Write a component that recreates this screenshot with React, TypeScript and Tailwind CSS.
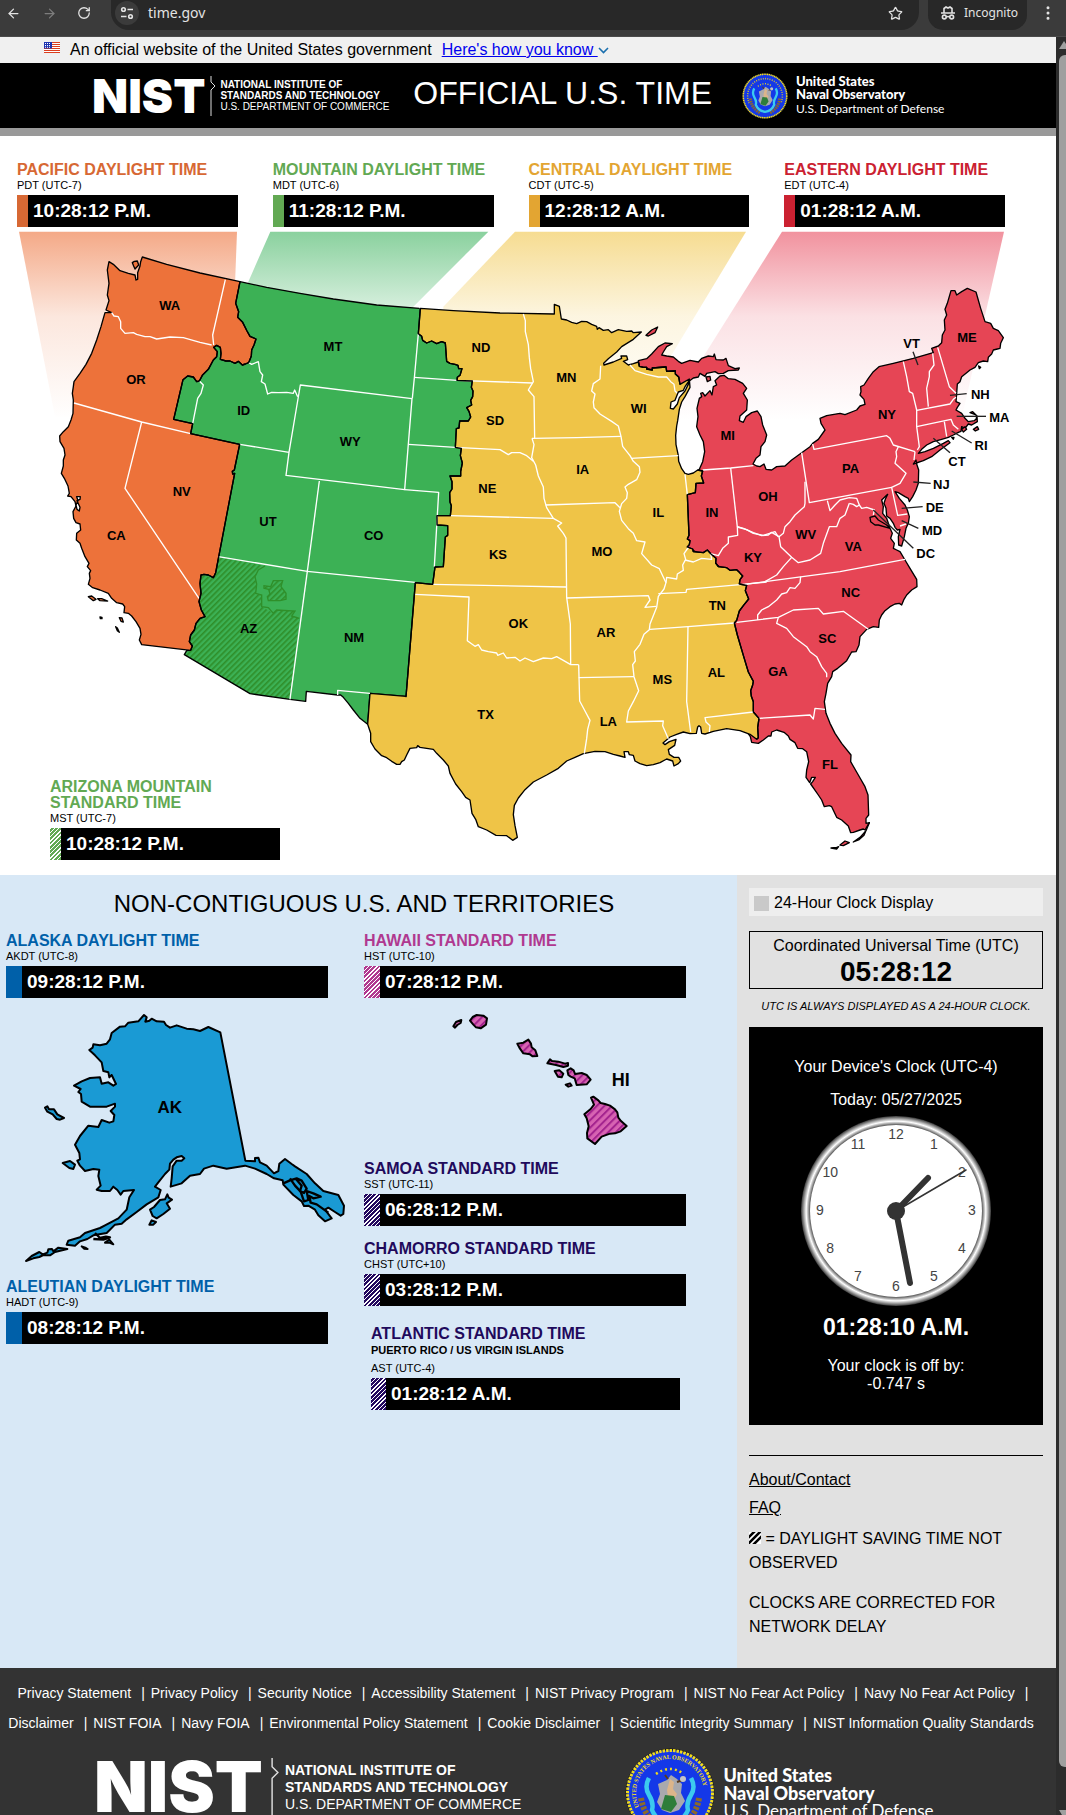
import { ArrowLeft, ArrowRight, ChevronDown, EllipsisVertical, RotateCw, Star } from "lucide-react";

type Place = (points: string) => string;

/* Moves a list of points from its own survey sheet onto the shared drawing. */
function sheet(dx: number, dy: number, ky = 1): Place {
  return (points) =>
    points
      .trim()
      .split(/\s+/)
      .map((pair) => {
        const [x, y] = pair.split(",").map(Number);
        return `${x + dx},${Math.round(y * ky + dy)}`;
      })
      .join(" ");
}

const west = sheet(0, 0);
const mid = sheet(1200, 150, 1.1098);
const texas = sheet(960, 1350);
const northEast = sheet(1980, 120);
const southEast = sheet(1980, 930);
const alaska = sheet(0, -924, 1.2627);
const hawaii = sheet(-42, -354, 1.0331);

const northBorderWest = "720,155 800,172 900,190 1000,207 1130,225 1258,235";

const pacificEast =
  "720,155 707,220 716,245 713,262 728,277 741,303 750,319 768,327 762,345 755,360 754,378 746,398 736,402 727,405 715,394 705,400 690,393 678,393 661,388 663,370 661,352 650,346 641,352 652,365 650,380 640,390 625,418 607,436 598,453 590,455 580,441 563,438 549,449 521,568 578,581 572,611 719,643 703,720 697,724 698,732 704,730 647,1028 640,1043 625,1035 612,1033 603,1035 600,1060 603,1090 597,1115 604,1140 615,1160 600,1165 588,1180 583,1200 572,1215 568,1235 577,1248 572,1261";

const pacific = west(
  "427,81 500,103 600,129 " +
    pacificEast +
    " 425,1244 418,1230 423,1213 420,1195 408,1175 395,1158 385,1150 372,1148 374,1130 368,1122 350,1118 335,1105 325,1090 300,1080 278,1073 265,1063 270,1045 268,1030 272,1022 262,1010 267,1000 255,980 245,955 240,940 229,930 230,910 242,900 240,882 228,878 221,865 219,845 228,828 225,815 213,800 203,798 208,790 204,768 193,745 184,730 190,708 190,690 195,675 192,655 180,635 179,618 190,605 205,590 213,570 219,550 220,510 217,490 220,470 222,455 240,430 258,403 275,370 290,330 303,290 310,265 315,248 335,248 318,240 327,212 322,195 327,160 322,120 327,95 340,103 360,122 385,130 405,135 408,150 413,148 413,128 420,108 422,95",
);

const mountainCentral =
  "61,77 55,145 65,152 68,163 80,170 95,165 110,172 125,167 136,170 140,220 150,225 165,228 174,231 176,240 186,240 180,258 172,263 171,271 217,273 214,290 219,300 218,315 212,325 215,338 200,345 207,355 212,370 205,381 179,381 177,400 169,402 166,452 184,455 181,475 187,495 182,518 182,530 150,530 156,545 156,565 149,575 150,600 154,610 151,637 111,637 111,662 143,664 143,690 136,695 130,775 105,776 98,823 46,818 18,1126";

const mountainSouth = "1110,1390 1103,1483 1080,1465 1060,1440 1045,1420 1030,1402 1022,1395 1013,1395 919,1384 917,1414 870,1408 750,1391 553,1274 560,1262 572,1261";

const mountain =
  west(northBorderWest) +
  " " +
  mid(mountainCentral) +
  " " +
  west(mountainSouth + " 560,1200 590,1060 650,720 540,640 500,560 520,420 620,330 680,300 700,230 700,151");

const centralNorth =
  "61,77 160,83 300,89 463,92 463,66 478,71 484,105 500,108 515,114 530,118 545,112 560,113 575,120 590,125 592,133 597,129 610,136 625,134 635,142 655,134 680,139 695,138 700,142 724,141 700,160 665,180 650,195 625,213 611,225 612,230 640,222 665,212 663,205 680,205 683,215 670,220 685,230 700,226 715,222";

const upperBorder = "715,222 718,233 730,236 740,236 740,241 757,243 757,238 798,235 800,247 826,246 826,254 836,262 840,282";

const centralEast =
  "893,514 908,516 904,530 911,549 888,550 886,575 862,580 867,690 862,700 870,705 868,715 862,722 878,727 880,734 910,737 922,730 932,740 948,752 947,765 955,775 980,778 990,785 1010,783 1018,790 1028,800 1020,810 1018,822 1040,825 1036,840 1046,862 1030,880 1018,895 1010,920 1003,927 1012,960 1030,1015 1045,1060 1060,1085 1058,1095 1052,1110 1054,1125 1060,1140 1060,1168 1077,1185 1073,1210 1075,1237 1070,1242";

const central =
  mid(
    centralNorth +
      " " +
      upperBorder +
      " 868,268 870,290 855,315 845,330 838,350 833,380 830,395 827,420 828,445 835,475 836,490 845,510 855,523 865,525 880,522 " +
      centralEast +
      " 1050,1228 1020,1218 980,1213 940,1220 915,1227 905,1225 902,1208 897,1205 893,1208 889,1225 870,1226 850,1222 830,1228 810,1235 795,1247 789,1252 795,1256 808,1248 828,1242 824,1258 805,1270 808,1282 822,1290 836,1290 842,1300 835,1307 822,1314 818,1300 800,1295 780,1305 760,1310 740,1313 720,1307 705,1300 700,1285 688,1283 685,1275 672,1275 675,1290 660,1287 640,1282 615,1275 585,1274 550,1280 525,1290 500,1300 475,1320 440,1338 400,1357 375,1378 355,1400 343,1420 340,1445 345,1475",
  ) +
  " " +
  texas(
    "592,472 578,481 560,467 528,466 500,450 475,440 467,418 456,400 450,360 437,352 425,335 407,312 390,280 385,258 370,240 350,220 340,208 300,202 293,197 290,203 270,205 260,225 253,240 245,245 240,253 230,253 215,244 200,233 185,227 165,207 152,185 152,160 143,133 150,40 258,49",
  ) +
  " " +
  mid(mountainCentral.split(" ").reverse().join(" "));

const eastern =
  northEast(
    "118,598 128,575 134,545 130,515 120,495 110,470 114,440 111,415 118,385 125,380 122,370 128,368 135,378 150,362 156,375 160,350 170,345 165,332 180,318 192,316 205,326 225,328 248,340 260,355 250,370 262,390 260,420 240,438 238,452 250,457 258,440 275,428 292,423 303,440 308,465 320,495 315,515 303,530 300,555 288,565 279,582 290,588 300,590 312,582 318,598 335,600 350,590 375,588 395,570 425,548 450,530 458,520 475,508 495,480 483,460 480,445 500,437 540,430 555,434 590,420 600,408 615,403 612,388 600,375 603,365 602,350 612,345 625,325 640,305 657,290 700,280 760,265 812,250 820,248 815,235 835,228 845,218 847,195 855,180 853,150 860,135 855,118 862,100 873,62 885,62 890,75 905,65 922,55 948,66 962,115 975,155 992,160 1000,175 1015,182 1030,203 1022,220 1020,235 1012,237 1000,240 995,252 985,262 983,275 970,273 955,278 945,292 930,300 920,308 905,320 900,335 892,342 890,370 888,395 900,400 892,412 888,420 905,430 915,445 925,455 943,452 950,445 948,435 930,428 938,425 951,438 952,455 935,465 925,462 915,475 905,470 903,484 895,487 880,495 865,502 845,508 820,515 800,525 785,538 775,550 795,545 820,535 850,520 865,512 870,518 840,540 815,560 790,572 760,582 768,570 770,582 776,600 775,640 768,660 758,680 748,695 745,685 735,680 715,668 705,665 718,685 735,705 742,720 748,740 745,760 738,775 733,800 725,828 716,825 715,800 720,778 712,780 705,772 700,760 690,745 680,738 678,715 672,700 676,688 683,673 665,690 670,710 668,730 680,745 690,775 655,765 645,765 632,755 630,742 645,738 655,750 680,765 690,775 697,790 692,805 703,820 700,835 710,840 720,845 735,870",
  ) +
  " " +
  southEast(
    "735,60 750,85 770,118 771,140 755,150 740,165 732,178 725,195 718,190 705,192 690,200 675,212 665,225 658,240 656,262 640,260 620,268 600,290 597,315 588,335 575,336 560,362 545,375 533,385 518,395 515,410 503,430 498,460 493,485 498,520 510,550 525,580 545,610 573,645 572,665 595,705 615,740 624,765 626,825 618,835 618,850 628,848 615,870 610,867 600,870 580,877 572,878 565,858 545,840 530,832 515,800 508,797 493,800 485,780 475,765 452,732 458,725 466,712 455,712 449,728 438,712 440,690 446,665 440,635 428,626 413,625 405,608 390,598 385,588 372,577 350,570 335,576 333,588 325,588 310,600 295,610 275,607 271,590 250,560 240,420 200,260 240,160 220,110 150,60 80,20",
  ) +
  " " +
  northEast("70,820 70,690 80,640");

const upperMichigan = mid(
  "715,218 740,213 755,200 775,180 795,170 817,172 800,180 790,195 785,203 800,205 820,208 835,220 845,225 870,217 895,222 905,212 925,205 940,207 943,200 948,215 970,216 978,212 985,232 1005,240 1018,238 1015,243 985,245 970,252 955,253 945,248 920,252 915,260 900,252 895,262 880,265 865,275 845,315 840,300 836,262 826,254 826,246 800,247 798,235 757,238 757,243 740,241 740,236 730,236 718,233",
);

const stateLines = [
  west("676,149 638,315 641,345"),
  west("335,248 342,258 355,260 362,275 362,295 375,310 400,308 410,313 435,320 450,320 470,327 510,321 550,323 600,337 635,345"),
  west("222,519 425,576 572,611"),
  west("425,576 375,775 597,1105"),
  west("598,453 610,465 603,490 593,505 578,581"),
  west("746,398 755,403 775,395 780,425 788,435 784,455 795,462 803,492 815,487 835,488 860,487 880,490 884,480 893,500"),
  west("719,643 867,667 858,736 1214,779 1236,506 901,465 867,667"),
  west("958,753 922,1024"),
  west("655,980 922,1024 1246,1057"),
  west("922,1024 870,1408"),
  west("1013,1395 1013,1381 1110,1390"),
  west("1214,779 1316,787 1303,1010"),
  mid("55,145 43,265 37,320"),
  mid("43,263 171,271 397,278"),
  mid("25,444 166,452 300,459 325,472 335,467 360,467 380,475 400,490"),
  mid("46,850 207,857 202,975 225,990 235,986 245,1000 265,1005 290,1008 293,1015 310,1008 320,1022 345,1020 360,1030 375,1022 400,1032 430,1022 455,1024 470,1018 490,1028 512,1040 536,1040"),
  mid("370,92 376,110 376,140 385,175 388,210 392,240 400,275 385,297 402,315 404,428"),
  mid("602,232 600,268 580,280 575,300 585,308 580,330 582,345 600,362 635,382 655,395 663,423 668,450 690,475 700,490 718,505 720,520 710,540 685,552 675,560 682,575 680,590 665,605 658,625 665,650 685,672 700,685 710,705 735,708 725,740 755,770 778,780 798,818 792,835 775,855 770,885 750,930 748,945 732,958 720,985 703,1005 706,1030 698,1040 702,1072 716,1110 700,1140 685,1165 680,1195 790,1192 788,1205 805,1240"),
  mid("396,428 530,426 663,423"),
  mid("693,482 835,475"),
  mid("437,608 645,602 660,615"),
  mid("396,428 402,445 395,480 407,500 415,530 430,560 432,590 440,615 460,644 485,657 473,665 490,685 498,697 500,858 511,930 512,1040"),
  mid("151,637 460,644"),
  mid("98,823 498,830"),
  mid("500,860 745,853 750,865 735,885 768,882"),
  mid("536,1075 702,1072"),
  mid("536,1040 539,1138 555,1165 570,1190 563,1215 560,1240 553,1280"),
  mid("855,525 862,580"),
  mid("866,722 852,740 857,755 848,770 850,785 832,795 830,808 800,804 798,818"),
  mid("855,757 880,762 905,752 935,755 932,740 955,745 968,725 985,712 985,695 1013,690 1012,668 1040,675 1060,685 1090,690 1125,680 1135,695"),
  mid("775,848 858,844 860,836 1020,824 1100,816"),
  mid("750,944 864,937 1003,927"),
  mid("864,937 860,1140 872,1222"),
  mid("1060,1168 915,1183 918,1195 930,1205 928,1222"),
  mid("908,514 992,508 1060,502"),
  mid("992,508 1012,668"),
  mid("690,230 705,245 740,255 775,262 800,262 812,275 822,282 825,300 832,306"),
  northEast("425,548 448,698 695,652"),
  northEast("458,522 462,538 680,497 690,505 700,525 765,545"),
  northEast("715,530 708,545 710,560 705,580 738,610 720,640 695,652 713,736 742,732"),
  northEast("765,545 762,570"),
  northEast("730,275 740,320 748,365 758,370 770,420 770,470 778,530 772,540"),
  northEast("818,250 822,285 808,305 808,320 800,355 805,410"),
  northEast("770,421 870,402 880,388 888,382"),
  northEast("833,232 868,350 888,370"),
  northEast("770,470 873,448 880,465 895,478"),
  northEast("853,455 860,500"),
  northEast("435,635 435,700 433,710 405,735 390,755 375,770 370,790 357,800 335,787 325,795 305,797 280,788 250,775 232,770"),
  northEast("357,800 362,830 395,862 415,878 450,870 482,850 490,820 508,770 530,770 540,745 555,735 568,700"),
  northEast("502,692 510,722 525,705 540,690 568,683 590,685 598,705 605,715 620,712 643,720 640,735"),
  northEast("568,700 580,703 590,710 598,705"),
  northEast("720,768 738,762"),
  southEast("255,133 315,125 540,95 735,58"),
  southEast("395,52 370,80 350,105 315,125"),
  southEast("422,110 420,128 405,145 390,143 380,158 365,162 350,180 325,200 305,210 293,225 293,240"),
  southEast("230,247 355,232 400,210 475,205 490,222 550,214 625,268"),
  southEast("355,232 350,250 380,265 400,290 440,320 450,335 470,350 485,380 500,400 500,412"),
  southEast("297,535 450,525 460,537 465,505 495,508"),
];

const labels: [Place, [string, number, number][]][] = [
  [west, [["WA", 509, 225], ["OR", 408, 447], ["MT", 999, 349], ["ID", 731, 542], ["WY", 1051, 634], ["NV", 545, 785], ["CA", 349, 916], ["UT", 804, 873], ["CO", 1121, 917], ["AZ", 746, 1195], ["NM", 1062, 1221]]],
  [mid, [["ND", 243, 181], ["MN", 499, 264], ["SD", 285, 380], ["WI", 716, 346], ["MI", 983, 421], ["IA", 548, 511], ["NE", 262, 564], ["IL", 775, 628], ["IN", 936, 627], ["OH", 1104, 585], ["KS", 294, 741], ["MO", 606, 734], ["KY", 1059, 751], ["OK", 355, 928], ["AR", 618, 952], ["TN", 952, 880], ["MS", 787, 1080], ["AL", 949, 1060], ["GA", 1134, 1057], ["TX", 257, 1174], ["LA", 625, 1193]]],
  [northEast, [["ME", 921, 201], ["VT", 755, 221], ["NH", 961, 374], ["NY", 681, 432], ["MA", 1018, 442], ["RI", 963, 525], ["CT", 891, 574], ["PA", 572, 596], ["NJ", 844, 642], ["DE", 824, 711], ["MD", 816, 781], ["DC", 797, 850], ["WV", 437, 793], ["VA", 580, 828]]],
  [southEast, [["NC", 572, 158], ["SC", 502, 294], ["FL", 510, 673]]],
];

const leaders = ["759,245 774,285", "870,376 920,371", "890,439 978,439", "875,483 935,519", "820,505 870,548", "760,636 812,640", "725,715 788,710", "725,752 775,775", "640,720 760,835"];

const coastalIslands = [
  { fill: "#ed723a", points: west("397,98 403,94 412,93 416,105 405,117 401,108") },
  { fill: "#ed723a", points: west("265,1100 275,1098 288,1108 280,1112") },
  { fill: "#ed723a", points: west("293,1106 305,1106 323,1113 300,1112") },
  { fill: "#ed723a", points: west("300,1161 306,1162 306,1166 301,1166") },
  { fill: "#ed723a", points: west("358,1163 366,1164 370,1176 363,1174") },
  { fill: "#ed723a", points: west("347,1190 352,1194 358,1207 352,1202") },
  { fill: "#ffffff", points: west("230,800 241,800 240,808 231,812 240,832 238,843 231,838 228,825 234,812") },
  { fill: "#e64555", points: mid("738,150 755,135 773,127 765,142 745,151") },
  { fill: "#e64555", points: mid("918,262 930,260 932,270 922,275") },
  { fill: "#ffffff", points: mid("868,271 855,288 850,298 835,303 825,325 813,330 811,347 820,349 832,335 838,318 855,300 866,280") },
  { fill: "#e64555", points: northEast("905,478 915,470 920,478 910,486") },
  { fill: "#e64555", points: northEast("940,478 952,470 956,478 946,483") },
  { fill: "#e64555", points: northEast("875,502 882,502 880,508") },
  { fill: "#e64555", points: northEast("956,288 962,292 958,296") },
  { fill: "#e64555", points: southEast("628,848 618,872 600,892 580,906 596,900 612,886") },
  { fill: "#e64555", points: southEast("568,908 555,903 540,915 550,917") },
  { fill: "#e64555", points: southEast("513,924 530,922 536,920 530,927") },
];

const arizona = west(
  "655,980 795,1008 775,1020 765,1040 770,1062 767,1090 785,1095 785,1130 820,1150 830,1140 885,1143 875,1158 898,1165 870,1408 750,1391 553,1274 577,1248 568,1235 583,1200 588,1180 600,1165 615,1160 604,1140 597,1115 603,1090 600,1060 603,1035 640,1043 647,1028",
);

function CountryMap() {
  return (
    <svg viewBox="0 0 3168 1935" className="block w-full" fontFamily="'Liberation Sans', Arial, sans-serif" role="img" aria-label="Time zones of the contiguous United States">
      <defs>
        {[
          ["beam-pacific", "#f4a987"],
          ["beam-mountain", "#8ad19e"],
          ["beam-central", "#f6dc91"],
          ["beam-eastern", "#f1929e"],
        ].map(([id, color]) => (
          <linearGradient key={id} id={id} gradientUnits="userSpaceOnUse" x1="0" x2="0" y1="5" y2="570">
            <stop offset="0" stopColor={color} />
            <stop offset="0.45" stopColor={color} stopOpacity="0.28" />
            <stop offset="1" stopColor={color} stopOpacity="0" />
          </linearGradient>
        ))}
        <pattern id="az-stripes" width="12" height="12" patternUnits="userSpaceOnUse" patternTransform="rotate(45)">
          <rect width="5" height="12" fill="#2f8f2a" />
        </pattern>
      </defs>
      <polygon points="57,5 711,5 690,560 165,560" fill="url(#beam-pacific)" />
      <polygon points="811,5 1465,5 1240,230 1200,400 700,400 745,155" fill="url(#beam-mountain)" />
      <polygon points="1545,5 2238,5 2020,366 1900,560 1330,560 1330,230" fill="url(#beam-central)" />
      <polygon points="2346,5 3012,5 2884,570 2000,570 2115,372" fill="url(#beam-eastern)" />
      <g stroke="#000" strokeWidth="4" strokeLinejoin="round">
        <polygon points={eastern} fill="#e64555" />
        <polygon points={upperMichigan} fill="#e64555" />
        <polygon points={mountain} fill="#3cb155" stroke="none" />
        <polygon points={arizona} fill="url(#az-stripes)" stroke="none" />
      </g>
      <g fill="none" stroke="#2f8f2a" strokeWidth="4">
        <polyline points={west("795,1008 775,1020 765,1040 770,1062 767,1090 785,1095 785,1130 805,1133 820,1150 830,1140 885,1143 875,1158 898,1165")} />
        <polygon points={west("820,1052 848,1052 843,1070 858,1090 858,1108 840,1112 805,1112 802,1100 810,1092 806,1078 792,1075 792,1067 812,1070")} fill="url(#az-stripes)" />
      </g>
      <g stroke="#000" strokeWidth="4" strokeLinejoin="round">
        <polyline points={west(northBorderWest)} fill="none" />
        <polyline points={west("1218,1399 " + mountainSouth)} fill="none" />
        <polygon points={central} fill="#efc447" />
        <polygon points={pacific} fill="#ed723a" />
      </g>
      <g fill="none" stroke="#fff" strokeWidth="4" strokeLinejoin="round">
        {stateLines.map((points) => (
          <polyline key={points} points={points} />
        ))}
      </g>
      <g fill="none" stroke="#000" strokeWidth="4" strokeLinejoin="round">
        <polyline points={west(pacificEast)} />
        <polyline points={mid(mountainCentral)} />
        <polyline points={mid(upperBorder)} />
        <polyline points={mid(centralEast)} />
      </g>
      <g stroke="#000" strokeWidth="4" strokeLinejoin="round">
        {coastalIslands.map((island) => (
          <polygon key={island.points} {...island} />
        ))}
      </g>
      <g stroke="#222" strokeWidth="4">
        {leaders.map((points) => (
          <polyline key={points} points={northEast(points)} />
        ))}
      </g>
      <g fontSize="39" fontWeight="700" textAnchor="middle">
        {labels.map(([place, items]) =>
          items.map(([name, lx, ly]) => {
            const [x, y] = place(`${lx},${ly}`).split(",").map(Number);
            return (
              <text key={name} x={x} y={y + 14}>
                {name}
              </text>
            );
          }),
        )}
      </g>
    </svg>
  );
}

const alaskaMain =
  "432,772 440,778 436,788 448,786 455,781 470,787 492,788 498,796 510,802 530,797 560,805 580,806 600,810 625,801 661,813 736,1118 765,1120 765,1112 775,1111 780,1122 800,1130 822,1148 835,1143 838,1125 855,1114 875,1126 885,1132 920,1150 945,1172 970,1190 1015,1200 1032,1225 1030,1245 1022,1249 1005,1240 985,1230 975,1235 995,1255 975,1262 955,1248 945,1235 925,1225 912,1226 905,1215 880,1200 850,1175 848,1165 822,1160 800,1150 765,1137 735,1130 680,1137 640,1130 612,1137 600,1150 570,1154 545,1172 512,1180 515,1160 518,1132 530,1118 545,1118 553,1113 545,1107 530,1110 520,1116 510,1125 508,1140 495,1150 475,1170 465,1180 482,1188 475,1205 440,1222 410,1240 380,1258 365,1268 345,1270 320,1290 280,1296 262,1304 240,1310 225,1320 200,1318 205,1308 240,1300 255,1290 300,1278 315,1272 355,1255 380,1235 388,1205 402,1188 370,1190 362,1199 352,1188 340,1180 330,1190 305,1190 290,1187 302,1178 295,1155 298,1140 280,1138 255,1143 240,1130 232,1118 240,1115 238,1100 225,1080 240,1060 265,1035 295,1038 305,1022 328,1028 340,1025 343,1010 332,1000 345,990 345,983 320,990 270,990 245,978 243,960 235,955 242,948 222,940 245,930 270,922 300,920 305,935 325,932 340,940 348,936 335,915 328,920 325,908 310,905 305,885 285,868 268,855 278,850 280,842 300,844 320,840 330,830 335,815 360,800 375,799 385,790 415,787";

function AlaskaMap() {
  return (
    <svg viewBox="18 0 966 840" className="block w-full overflow-visible" fontFamily="'Liberation Sans', Arial, sans-serif" role="img" aria-label="Alaska">
      <g fill="#1a9ad4" stroke="#000" strokeWidth="6" strokeLinejoin="round">
        <polygon points={alaska(alaskaMain)} />
        <polygon points={alaska("135,992 142,989 147,996 162,996 172,1008 192,1017 180,1021 170,1019 158,1008 142,1002")} />
        <polygon points={alaska("188,1124 210,1119 225,1128 220,1138 208,1136")} />
        <polygon points={alaska("450,1235 462,1228 480,1212 495,1210 502,1198 506,1206 516,1211 500,1220 510,1232 490,1245 470,1255 458,1250")} />
        <polygon points={alaska("448,1270 455,1260 468,1264 460,1270")} />
        <polygon points={alaska("78,1357 95,1345 118,1335 128,1341 142,1337 145,1329 156,1328 160,1334 175,1325 202,1328 165,1335 150,1343 130,1342 118,1347 100,1350")} />
        <polygon points={alaska("245,1322 258,1326 263,1328 252,1327")} />
        <polygon points={alaska("315,1313 328,1306 340,1317 328,1313")} />
      </g>
      <g fill="none" stroke="#000" strokeWidth="7" strokeLinejoin="round">
        <polyline points={alaska("850,1172 870,1165 890,1160 905,1166 920,1185 912,1195 900,1190 905,1178 888,1162")} />
        <polyline points={alaska("870,1160 885,1178 902,1192 912,1215 925,1212 920,1190 940,1196 962,1204 940,1208 928,1202 932,1218 950,1222 985,1242")} />
        <polyline points={alaska("285,1290 300,1302 318,1299 330,1300 310,1306 280,1304")} />
      </g>
      <text x="509" y="346" fontSize="51" fontWeight="700" textAnchor="middle">
        AK
      </text>
    </svg>
  );
}

function HawaiiMap() {
  return (
    <svg viewBox="0 0 966 486" className="block w-full" fontFamily="'Liberation Sans', Arial, sans-serif" role="img" aria-label="Hawaii">
      <defs>
        <pattern id="hi-stripes" width="16" height="16" patternUnits="userSpaceOnUse" patternTransform="rotate(45)">
          <rect width="16" height="16" fill="#d763b2" />
          <rect width="6" height="16" fill="#a3238e" />
        </pattern>
      </defs>
      <g fill="url(#hi-stripes)" stroke="#000" strokeWidth="6" strokeLinejoin="round">
        {[
          "310,425 318,412 334,407 332,415 322,421 315,429",
          "360,408 368,398 380,392 400,394 411,402 408,420 392,431 378,428 370,420",
          "502,475 520,472 535,464 543,475 545,486 556,495 562,511 548,512 540,506 520,503 510,490",
          "592,532 600,521 606,526 625,528 645,533 654,531 654,539 640,543 618,537",
          "614,555 628,553 640,562 635,573 624,571",
          "647,594 660,590 665,597 655,600",
          "652,553 662,547 671,553 675,563 695,560 710,566 722,580 710,593 680,595 674,576 662,571 655,566",
          "723,632 730,629 745,640 752,648 765,650 780,655 795,666 802,675 805,690 813,700 830,714 812,730 795,736 780,737 755,745 735,767 712,750 711,735 716,715 710,692 703,680 722,665 732,652",
        ].map((points) => (
          <polygon key={points} points={hawaii(points)} />
        ))}
      </g>
      <text x="770" y="264" fontSize="54" fontWeight="700" textAnchor="middle">
        HI
      </text>
    </svg>
  );
}

interface ZoneProps {
  title: string;
  code: string;
  time: string;
  text: string;
  band: string;
  region?: string;
}

function Zone({ title, code, time, text, band, region }: ZoneProps) {
  return (
    <section>
      <h3 className={`text-base leading-[18px] font-bold ${text}`}>{title}</h3>
      {region && <p className="mb-[5px] text-[11px] leading-[14px] font-bold">{region}</p>}
      <p className="text-[11px] leading-3">{code}</p>
      <div className="mt-1 flex h-8 items-center bg-black text-[19px] font-bold text-white">
        <span className={`h-full shrink-0 ${band}`} />
        <time className="pl-[5px]">{time}</time>
      </div>
    </section>
  );
}

const hatchGreen = "w-[11px] bg-[repeating-linear-gradient(135deg,#fff_0_1px,#62a953_1px_3px)]";
const hatchPink = "w-4 bg-[repeating-linear-gradient(135deg,#fff_0_1px,#b03990_1px_3px)]";
const hatchIndigo = "w-4 bg-[repeating-linear-gradient(135deg,#fff_0_1px,#23095f_1px_3px)]";
const hatchIndigoNarrow = "w-[15px] bg-[repeating-linear-gradient(135deg,#fff_0_1px,#23095f_1px_3px)]";

function NistLogo({ large }: { large?: boolean }) {
  return (
    <div className="flex items-center text-white">
      <span className={large ? "font-[Inter] text-[70px] leading-[60px] font-black" : "font-[Inter] text-[47px] leading-10 font-black"}>NIST</span>
      <svg viewBox="0 0 8 40" className={large ? "ml-1.5 h-[58px] w-3" : "ml-1 h-10 w-2"} fill="none" stroke="#ddd" strokeWidth="1">
        <path d="M2 0v6l4 4-4 4v26" />
      </svg>
      <div className={large ? "ml-1 text-sm leading-[17px] font-bold" : "ml-[3px] text-[10px] leading-[11px] font-bold"}>
        <p>NATIONAL INSTITUTE OF</p>
        <p>STANDARDS AND TECHNOLOGY</p>
        <p className="font-normal">U.S. DEPARTMENT OF COMMERCE</p>
      </div>
    </div>
  );
}

function Seal({ className, ring, lettered }: { className: string; ring: string; lettered?: boolean }) {
  return (
    <svg viewBox="0 0 90 90" className={className} role="img" aria-label="Naval Observatory seal">
      <defs>
        <path id={ring} d="M14 59a34 34 0 1 1 62 0" />
      </defs>
      <circle cx="45" cy="45" r="44" fill="#111b7a" stroke="#111" />
      <circle cx="45" cy="45" r="42.500" fill="#1438e8" stroke="#f2dd1c" strokeWidth="3" strokeDasharray="2.500 1" />
      {lettered ? (
        <text fontSize="6" fontWeight="700" fill="#f2dd1c" fontFamily="'Liberation Serif', serif">
          <textPath href={`#${ring}`}>UNITED STATES NAVAL OBSERVATORY</textPath>
        </text>
      ) : (
        <path d="M14 59a34 34 0 1 1 62 0" fill="none" stroke="#c9b93c" strokeWidth="3" strokeDasharray="2 2.500" />
      )}
      <path d="M31 26q7-5 14-5t14 5" fill="none" stroke="#f2dd1c" strokeWidth="2.500" strokeDasharray="2 3" />
      <path d="M16 50q3 20 20 28M74 50q-3 20-20 28" fill="none" stroke="#8a6a2c" strokeWidth="6" strokeDasharray="3 1.500" />
      <path d="M24 30q-5 9 0 17t3 15q5 12 18 14 13-2 18-14-2-7 3-15t0-17" fill="none" stroke="#3cc9ee" strokeWidth="4.500" />
      <path d="M33 36l9-4 4-5 6 4 5 5-1 9 4 8-6 9-9 3-8-3-5-8 3-8z" fill="#a9a9ad" />
      <path d="M45 31l4 3-1 7 4 5-3 6-6-2-1-8z" fill="#dcb58a" />
      <path d="M40 47l9 1 3 8-6 8-10-3z" fill="#2e7d3a" />
      <path d="M40 27l3 4M52 34l6-2" stroke="#5a3a1a" strokeWidth="2" />
      <circle cx="58" cy="31" r="3" fill="#c5c5c5" />
    </svg>
  );
}

function ObservatoryText({ large }: { large?: boolean }) {
  return (
    <div className={large ? "font-[Lato] text-lg leading-[18px] text-white" : "font-[Lato] text-[13px] leading-[13px] text-white"}>
      <p className="font-black">United States</p>
      <p className="font-black">Naval Observatory</p>
      <p className={large ? "text-[17px]" : "text-xs"}>U.S. Department of Defense</p>
    </div>
  );
}

function ClockFace() {
  return (
    <svg viewBox="0 0 190 190" className="mx-auto block w-[190px]" fontFamily="'Liberation Sans', Arial, sans-serif" role="img" aria-label="Clock showing 1:28:10">
      <defs>
        <radialGradient id="rim" gradientUnits="userSpaceOnUse" cx="95" cy="95" r="95">
          <stop offset="0.900" stopColor="#444" />
          <stop offset="0.945" stopColor="#fff" />
          <stop offset="1" stopColor="#3a3a3a" />
        </radialGradient>
      </defs>
      <circle cx="95" cy="95" r="95" fill="url(#rim)" />
      <circle cx="95" cy="95" r="86" fill="#fff" />
      <g fontSize="14" fill="#444" textAnchor="middle">
        {Array.from({ length: 12 }, (_, i) => {
          const angle = ((i + 1) * Math.PI) / 6;
          return (
            <text key={i} x={95 + 76 * Math.sin(angle)} y={99 - 76 * Math.cos(angle)}>
              {i + 1}
            </text>
          );
        })}
      </g>
      <g stroke="#333" strokeLinecap="round">
        <path d="M95 95L127 62" strokeWidth="6" />
        <path d="M95 95L109 167" strokeWidth="6" />
        <path d="M95 95L165 54" strokeWidth="1.500" />
      </g>
      <circle cx="95" cy="95" r="9" fill="#333" />
    </svg>
  );
}

const footerRows = [
  ["Privacy Statement", "Privacy Policy", "Security Notice", "Accessibility Statement", "NIST Privacy Program", "NIST No Fear Act Policy", "Navy No Fear Act Policy", ""],
  ["Disclaimer", "NIST FOIA", "Navy FOIA", "Environmental Policy Statement", "Cookie Disclaimer", "Scientific Integrity Summary", "NIST Information Quality Standards"],
];

export default function App() {
  return (
    <div className="flex h-screen flex-col overflow-hidden bg-white font-['Liberation_Sans',Arial,sans-serif] text-black">
      <header className="flex h-[37px] shrink-0 items-start border-b border-[#4a4a4a] bg-[#3b3b3b] font-['Noto_Sans',sans-serif] text-[#e3e3e3]">
        <div className="flex h-[26px] w-[111px] items-center justify-between pr-5 pl-1.5">
          <button aria-label="Back"><ArrowLeft size={15} /></button>
          <button aria-label="Forward" className="text-[#7d7d7d]"><ArrowRight size={15} /></button>
          <button aria-label="Reload"><RotateCw size={14} strokeWidth={2.2} /></button>
        </div>
        <div className="flex h-[30px] flex-1 items-start rounded-b-[18px] bg-[#282828] pl-1">
          <button aria-label="Site information" className="mt-px flex size-6 items-center justify-center rounded-full bg-[#3b3b3b]">
            <svg viewBox="0 0 14 14" className="size-3.5" fill="none" stroke="#e3e3e3" strokeWidth="1.600">
              <circle cx="3.500" cy="3.500" r="1.800" />
              <path d="M7.500 3.500H13M1 10.500h5.500" />
              <circle cx="10.500" cy="10.500" r="1.800" />
            </svg>
          </button>
          <span className="ml-[9px] flex-1 text-sm leading-[26px]">time.gov</span>
          <button aria-label="Bookmark" className="mt-1.5 mr-4"><Star size={15} /></button>
        </div>
        <div className="ml-[9px] flex h-[30px] w-[99px] items-center gap-2 rounded-b-[15px] bg-[#282828] pb-1 pl-3 text-xs">
          <svg viewBox="0 0 16 16" className="size-4" fill="none" stroke="#e3e3e3" strokeWidth="1.600">
            <path d="M1 8h14M4 8V3.500L6 2l2 1 2-1 2 1.500V8M6.200 12q1.800-1 3.600 0" />
            <circle cx="4.300" cy="12" r="1.900" />
            <circle cx="11.700" cy="12" r="1.900" />
          </svg>
          Incognito
        </div>
        <button aria-label="Menu" className="mt-1 ml-3 w-[27px]"><EllipsisVertical size={18} /></button>
      </header>

      <div className="flex min-h-0 flex-1">
        <div className="min-w-0 flex-1 overflow-hidden">
          <div className="flex h-[26px] items-center bg-[#f0f0f0] pl-11 text-base">
            <svg viewBox="0 0 16 11" className="mb-1.5 h-[11px] w-4" aria-hidden="true">
              <rect width="16" height="11" fill="#fff" />
              <path d="M0 .5h16M0 2.500h16M0 4.500h16M0 6.500h16M0 8.500h16M0 10.500h16" stroke="#db3e1f" />
              <rect width="8" height="6.500" fill="#1e33b1" />
              <path d="M1 1.500h6M1 3.500h6M1 5.300h6" stroke="#fff" strokeDasharray="1 1" />
            </svg>
            <p className="ml-2.5">An official website of the United States government</p>
            <a href="#how" className="ml-2.5 flex items-center text-[#0000ee]">
              <span className="whitespace-pre underline">Here's how you know </span>
              <svg viewBox="0 0 11 7" className="h-[7px] w-[11px]" fill="none" stroke="#1a6fae" strokeWidth="1.600" aria-hidden="true">
                <path d="M1 1l4.500 4.500L10 1" />
              </svg>
            </a>
          </div>

          <div className="flex h-[73px] items-center border-b-8 border-[#999] bg-black pl-[92px]">
            <NistLogo />
            <h1 className="ml-6 text-[32px] leading-[60px] whitespace-nowrap text-white mb-1.5">OFFICIAL U.S. TIME</h1>
            <Seal className="ml-[30px] size-[46px]" ring="seal-ring-top" />
            <div className="ml-2"><ObservatoryText /></div>
          </div>

          <main>
            <div className="relative pt-[25px]">
              <div className="grid grid-cols-4 gap-x-[35px] pr-[51px] pb-[3px] pl-[17px]">
                <Zone title="PACIFIC DAYLIGHT TIME" code="PDT (UTC-7)" time="10:28:12 P.M." text="text-[#d76834]" band="w-[11px] bg-[#d76834]" />
                <Zone title="MOUNTAIN DAYLIGHT TIME" code="MDT (UTC-6)" time="11:28:12 P.M." text="text-[#62a953]" band="w-[11px] bg-[#62a953]" />
                <Zone title="CENTRAL DAYLIGHT TIME" code="CDT (UTC-5)" time="12:28:12 A.M." text="text-[#e3a532]" band="w-[11px] bg-[#e3a532]" />
                <Zone title="EASTERN DAYLIGHT TIME" code="EDT (UTC-4)" time="01:28:12 A.M." text="text-[#cb2131]" band="w-[11px] bg-[#cb2131]" />
              </div>
              <CountryMap />
              <div className="absolute bottom-[15px] left-[50px] w-[230px]">
                <h3 className="text-base leading-[14px] font-bold text-[#62a953]">ARIZONA MOUNTAIN</h3>
                <Zone title="STANDARD TIME" code="MST (UTC-7)" time="10:28:12 P.M." text="text-[#62a953]" band={hatchGreen} />
              </div>
            </div>

            <div className="grid grid-cols-[737fr_319fr]">
              <div className="bg-[#d8e8f6] pt-[13px] pr-[51px] pl-1.5">
                <h2 className="mb-3 pl-9 text-center text-2xl leading-8">NON-CONTIGUOUS U.S. AND TERRITORIES</h2>
                <div className="grid grid-cols-2 gap-x-9">
                  <div>
                    <Zone title="ALASKA DAYLIGHT TIME" code="AKDT (UTC-8)" time="09:28:12 P.M." text="text-[#0060a9]" band="w-4 bg-[#0060a9]" />
                    <AlaskaMap />
                    <Zone title="ALEUTIAN DAYLIGHT TIME" code="HADT (UTC-9)" time="08:28:12 P.M." text="text-[#0060a9]" band="w-4 bg-[#0060a9]" />
                  </div>
                  <div>
                    <Zone title="HAWAII STANDARD TIME" code="HST (UTC-10)" time="07:28:12 P.M." text="text-[#b03990]" band={hatchPink} />
                    <HawaiiMap />
                    <Zone title="SAMOA STANDARD TIME" code="SST (UTC-11)" time="06:28:12 P.M." text="text-[#1f0a5c]" band={hatchIndigo} />
                    <div className="pt-3.5">
                      <Zone title="CHAMORRO STANDARD TIME" code="CHST (UTC+10)" time="03:28:12 P.M." text="text-[#1f0a5c]" band={hatchIndigo} />
                    </div>
                    <div className="pt-[19px] pr-1.5 pl-[7px]">
                      <Zone title="ATLANTIC STANDARD TIME" region="PUERTO RICO / US VIRGIN ISLANDS" code="AST (UTC-4)" time="01:28:12 A.M." text="text-[#1f0a5c]" band={hatchIndigoNarrow} />
                    </div>
                  </div>
                </div>
              </div>

              <aside className="bg-[#e1e1e1] pt-[13px] pr-[13px] pb-[29px] pl-3">
                <label className="flex h-7 items-center gap-[5px] bg-[#eee] pt-0.5 pl-[5px]">
                  <input type="checkbox" className="size-[15px] appearance-none bg-[#c9c9c9]" />
                  24-Hour Clock Display
                </label>
                <div className="mt-[15px] border border-black pt-[5px] text-center">
                  <p className="leading-[18px]">Coordinated Universal Time (UTC)</p>
                  <p className="text-[28px] leading-[33px] font-bold">05:28:12</p>
                </div>
                <p className="mt-2.5 text-center text-[11px] leading-[14px] whitespace-nowrap italic">UTC IS ALWAYS DISPLAYED AS A 24-HOUR CLOCK.</p>
                <div className="mt-3.5 bg-black pt-[23px] pb-8 text-center text-white">
                  <p className="leading-[34px]">Your Device's Clock (UTC-4)</p>
                  <p className="leading-8">Today: 05/27/2025</p>
                  <ClockFace />
                  <p className="text-[23px] leading-[42px] font-bold">01:28:10 A.M.</p>
                  <p className="mt-[9px] leading-[18px]">
                    Your clock is off by:
                    <br />
                    -0.747 s
                  </p>
                </div>
                <hr className="mt-[30px] border-black" />
                <ul className="mt-2.5 leading-7">
                  <li><a href="#about" className="underline">About/Contact</a></li>
                  <li><a href="#faq" className="underline">FAQ</a></li>
                </ul>
                <p className="mt-[5px] leading-6">
                  <svg viewBox="0 0 12 12" className="inline size-3 align-baseline" aria-hidden="true">
                    <rect width="12" height="12" fill="#fff" />
                    <path d="M-1 6L6-1M-1 12L12-1M4 13L13 4" stroke="#000" strokeWidth="2.600" />
                  </svg>{" "}
                  = DAYLIGHT SAVING TIME NOT OBSERVED
                </p>
                <p className="mt-4 leading-6">CLOCKS ARE CORRECTED FOR NETWORK DELAY</p>
              </aside>
            </div>
          </main>

          <footer className="bg-[#333] pt-2.5 text-sm text-white">
            {footerRows.map((row) => (
              <ul key={row[0]} className="flex justify-center leading-[30px] whitespace-pre">
                {row.map((name, i) => (
                  <li key={name} className={name ? "last:pr-3.5" : "pr-1"}>
                    {i > 0 && <span className="pr-1.5 pl-2.5">|</span>}
                    {name && <a href="#policy">{name}</a>}
                  </li>
                ))}
              </ul>
            ))}
            <div className="mt-2.5 flex items-start pl-[94px]">
              <div className="pt-[9px]"><NistLogo large /></div>
              <div className="ml-[104px] flex items-center gap-2">
                <Seal className="size-[90px]" ring="seal-ring-bottom" lettered />
                <ObservatoryText large />
              </div>
            </div>
          </footer>
        </div>

        <div className="flex w-2.5 shrink-0 flex-col items-end bg-[#2c2c2c] pt-1" aria-hidden="true">
          <svg viewBox="0 0 7 8" className="h-2 w-[7px]"><path d="M0 8L5 0l2 3v5z" fill="#9f9f9f" /></svg>
          <div className="mt-1.5 mb-[43px] w-[7px] flex-1 rounded-l-md bg-[#9f9f9f]" />
          <svg viewBox="0 0 7 5" className="h-[5px] w-[7px]"><path d="M0 0h7v5H3z" fill="#9f9f9f" /></svg>
        </div>
      </div>
    </div>
  );
}
